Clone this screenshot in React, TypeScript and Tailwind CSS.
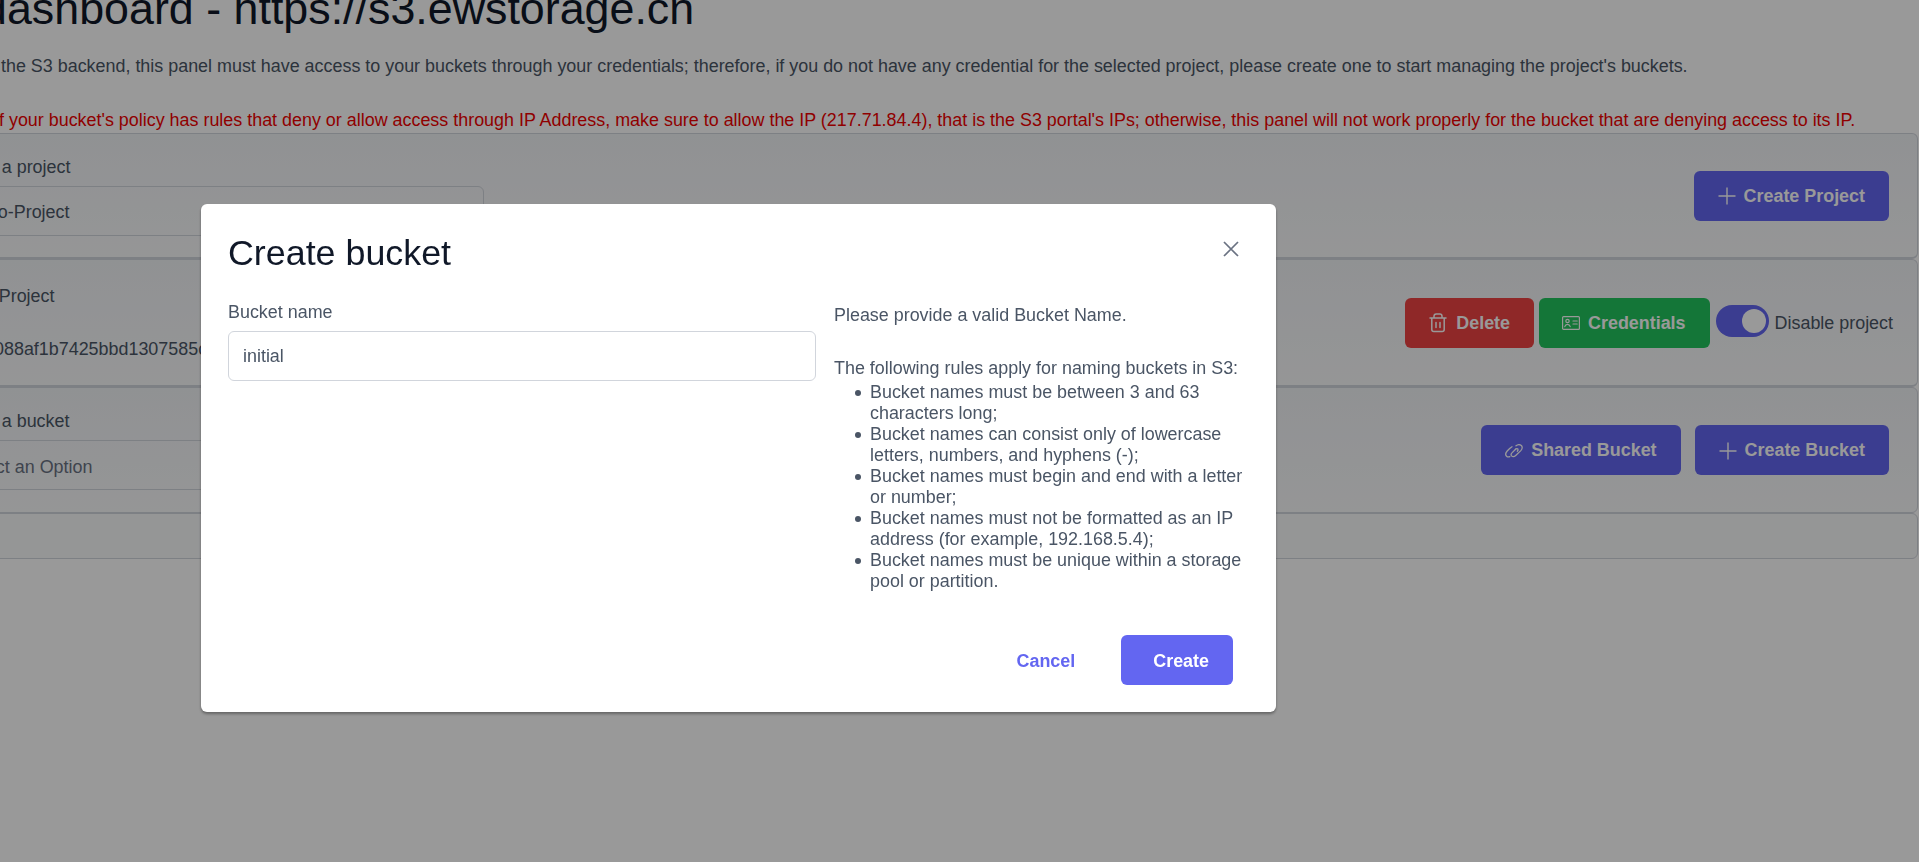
const buttonBase =
  "flex h-[50px] items-center rounded-md px-6 pt-px text-[17.92px] font-bold text-white";

const cardBase =
  "flex items-center justify-between rounded-md border border-gray-300 bg-linear-to-b from-[#f1f3f6] to-[#f9fafb] pl-5";

function PlusIcon() {
  return (
    <svg viewBox="0 0 18 18" className="mr-2 h-[18px] w-[18px]" fill="none" stroke="currentColor" strokeWidth="1.4">
      <path d="M9 0.5v17M0.5 9h17" />
    </svg>
  );
}

function TrashIcon() {
  return (
    <svg viewBox="0 0 18 20" className="mr-[9px] h-5 w-[18px]" fill="none" stroke="currentColor" strokeWidth="1.5" strokeLinecap="round" strokeLinejoin="round">
      <path d="M1 5h16M5 5V3.2C5 2 6 1 7.2 1h3.6C12 1 13 2 13 3.2V5M2.8 5v11.6c0 1.2.8 2 2 2h8.4c1.2 0 2-.8 2-2V5M7 9.5v5M11 9.5v5" />
    </svg>
  );
}

function CardIcon() {
  return (
    <svg viewBox="0 0 18 14" className="mr-2 h-[14px] w-[18px]" fill="none" stroke="currentColor" strokeWidth="1.2" strokeLinecap="round">
      <rect x="0.6" y="0.6" width="16.8" height="12.8" rx="1" />
      <circle cx="5.5" cy="5" r="1.7" />
      <path d="M2.8 10.6c.4-1.6 1.4-2.3 2.7-2.3s2.3.7 2.7 2.3M11 5h4.2M11 8h4.2" />
    </svg>
  );
}

function LinkIcon() {
  return (
    <svg viewBox="0 0 18 14" className="mr-2 h-[14px] w-[18px]" fill="none" stroke="currentColor" strokeWidth="1.3" strokeLinecap="round">
      <path d="M11 1.8C12.6.6 15 .5 16.3 1.6c1.4 1.3 1 3.4-.5 5L11 11.2c-1.5 1.4-3.5 1.6-4.4.7-.8-.8-.5-2.2.6-3.3l3.4-3.4" />
      <path d="M7 2.8C5.6 3.6 3.6 5.4 2.2 7 .6 8.8.4 11 1.6 12.2c.8.8 2 .9 3.2.4" />
      <path d="M10.4 5.2c.9-.8 2-.9 2.5-.2.4.6.1 1.5-.6 2.2" />
    </svg>
  );
}

function CloseIcon() {
  return (
    <svg viewBox="0 0 24 24" className="mt-[2px] mr-[3px] h-7 w-7 text-gray-500" fill="none" stroke="currentColor" strokeWidth="1.5">
      <path d="M6 6l12 12M18 6 6 18" />
    </svg>
  );
}

function Select({ value, muted }: { value: string; muted?: boolean }) {
  return (
    <div
      className={`flex h-[50px] w-[537px] items-center rounded-md border border-gray-300 pt-1 pl-3 ${
        muted ? "text-gray-500" : "text-gray-600"
      }`}
    >
      {value}
    </div>
  );
}

const rules = [
  "Bucket names must be between 3 and 63 characters long;",
  "Bucket names can consist only of lowercase letters, numbers, and hyphens (-);",
  "Bucket names must begin and end with a letter or number;",
  "Bucket names must not be formatted as an IP address (for example, 192.168.5.4);",
  "Bucket names must be unique within a storage pool or partition.",
];

export default function App() {
  return (
    <div className="h-screen overflow-hidden bg-white font-['Liberation_Sans',Arial,sans-serif] text-[17.92px] text-gray-600">
      <div className="-mt-[22px] -ml-[74px] w-[1992px]">
        <h1 className="ml-[56px] text-[44.8px] leading-[60px] whitespace-nowrap text-gray-900">
          dashboard - https://s3.ewstorage.cn
        </h1>
        <p className="mt-[15px] ml-[75px] leading-[27px] whitespace-nowrap">
          the S3 backend, this panel must have access to your buckets through your credentials; therefore, if you do not have any credential for the selected project, please create one to start managing the project's buckets.
        </p>
        <p className="mt-[27px] -mb-px ml-[68px] leading-[27px] whitespace-nowrap text-[#f00000]">
          If your bucket's policy has rules that deny or allow access through IP Address, make sure to allow the IP (217.71.84.4), that is the S3 portal's IPs; otherwise, this panel will not work properly for the bucket that are denying access to its IP.
        </p>

        <section className={`${cardBase} h-[126px] border-b-2 pr-[28px]`}>
          <div className="mb-[2px]">
            <p className="leading-[27px]">Select a project</p>
            <div className="mt-[5px]">
              <Select value="Demo-Project" />
            </div>
          </div>
          <button className={`${buttonBase} bg-[#6366f1]`}>
            <PlusIcon />
            Create Project
          </button>
        </section>

        <section className={`${cardBase} h-[128px] border-b-2 pr-6`}>
          <div className="flex flex-col gap-[26px] leading-[27px]">
            <p className="-ml-[2px]">Demo-Project</p>
            <p className="ml-[47px] whitespace-nowrap">088af1b7425bbd1307585c</p>
          </div>
          <div className="flex items-center">
            <button className={`${buttonBase} bg-[#ef4444]`}>
              <TrashIcon />
              Delete
            </button>
            <button className={`${buttonBase} ml-[5px] !pl-[23px] bg-[#22c55e]`}>
              <CardIcon />
              Credentials
            </button>
            <div className="mx-[6px] mb-1 flex h-8 w-[53px] items-center justify-end rounded-full bg-[#6366f1] pr-[3px]">
              <span className="h-6 w-6 rounded-full bg-white" />
            </div>
            <span className="pt-px">Disable project</span>
          </div>
        </section>

        <section className={`${cardBase} h-[126px] pr-[28px]`}>
          <div className="mb-[2px]">
            <p className="leading-[27px]">Select a bucket</p>
            <div className="mt-[5px]">
              <Select value="Select an Option" muted />
            </div>
          </div>
          <div className="flex items-center gap-[14px]">
            <button className={`${buttonBase} bg-[#6366f1]`}>
              <LinkIcon />
              Shared Bucket
            </button>
            <button className={`${buttonBase} bg-[#6366f1]`}>
              <PlusIcon />
              Create Bucket
            </button>
          </div>
        </section>

        <div className="h-[46px] rounded-md border border-gray-300 bg-[#f9fafb]" />
      </div>

      {/* modal overlay */}
      <div className="fixed inset-0 bg-black/40 pt-[204px] pl-[201px]">
        <div className="w-[1075px] rounded-md bg-white pt-[29px] pr-[28px] pb-[27px] pl-[27px] shadow-[0_2px_3px_rgba(0,0,0,0.35)]">
          <div className="mb-[25px] flex items-start justify-between">
            <h2 className="text-[35.84px] leading-10 text-gray-900">Create bucket</h2>
            <CloseIcon />
          </div>
          <div className="flex gap-[18px]">
            <div className="w-[588px]">
              <label className="block pt-px leading-[27px] text-gray-600">Bucket name</label>
              <input
                defaultValue="initial"
                className="mt-[5px] h-[50px] w-full rounded-md border border-gray-300 px-[14px] text-gray-600"
              />
            </div>
            <div className="w-[414px] pt-[7px] leading-[21px] text-gray-600">
              <p>Please provide a valid Bucket Name.</p>
              <p className="mt-[32px]">The following rules apply for naming buckets in S3:</p>
              <ul className="mt-[3px] pl-9">
                {rules.map((rule) => (
                  <li
                    key={rule}
                    className="relative before:absolute before:top-[8px] before:-left-[15px] before:h-[6px] before:w-[6px] before:rounded-full before:bg-gray-600"
                  >
                    {rule}
                  </li>
                ))}
              </ul>
            </div>
          </div>
          <div className="mt-[43px] flex items-center justify-end gap-[46px] pr-[15px]">
            <button className="pt-[3px] text-[17.92px] font-bold text-[#6366f1]">Cancel</button>
            <button className="h-[50px] rounded-md bg-[#6366f1] pt-[3px] pr-6 pl-8 text-[17.92px] font-bold text-white">
              Create
            </button>
          </div>
        </div>
      </div>
    </div>
  );
}
